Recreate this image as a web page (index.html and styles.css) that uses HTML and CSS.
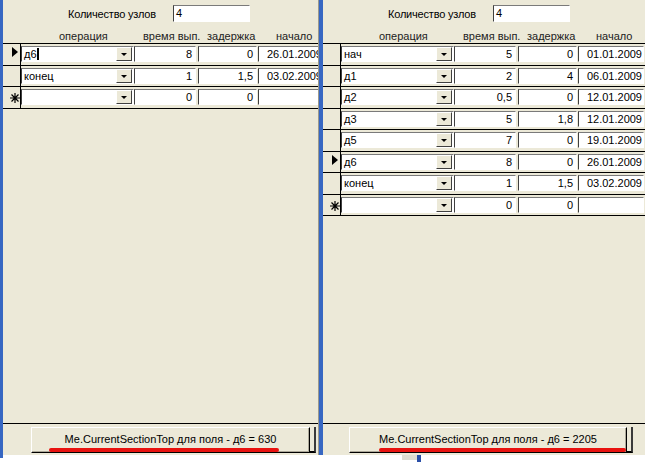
FILE: index.html
```html
<!DOCTYPE html>
<html lang="ru">
<head>
    <meta charset="UTF-8">
    <title>Узлы</title>
    <link rel="stylesheet" href="styles.css">
</head>
<body>
    <div class="desk">
        <!-- first form: three records -->
        <div class="form form-left">
            <div class="topbar">
                <span class="caption">Количество узлов</span>
                <span class="box count">4</span>
            </div>
            <div class="heads">
                <span class="h-op">операция</span>
                <span class="h-time">время вып.</span>
                <span class="h-delay">задержка</span>
                <span class="h-start">начало</span>
            </div>
            <div class="rows">
                <div class="row">
                    <span class="sel"><i class="arrow"></i></span>
                    <span class="box combo">д6<span class="caret"></span><b class="drop"></b></span>
                    <span class="box num time">8</span>
                    <span class="box num delay">0</span>
                    <span class="box num start">26.01.2009</span>
                </div>
                <div class="row">
                    <span class="sel"></span>
                    <span class="box combo">конец<b class="drop"></b></span>
                    <span class="box num time">1</span>
                    <span class="box num delay">1,5</span>
                    <span class="box num start">03.02.2009</span>
                </div>
                <div class="row">
                    <span class="sel"><svg class="star" width="10" height="10" viewBox="0 0 10 10"><path d="M5 0v10M0 5h10M1.5 1.5l7 7M8.5 1.5l-7 7" stroke="#000" stroke-width="1.2"/></svg></span>
                    <span class="box combo"><b class="drop"></b></span>
                    <span class="box num time">0</span>
                    <span class="box num delay">0</span>
                    <span class="box num start"></span>
                </div>
            </div>
            <div class="spacer"></div>
            <div class="foot">
                <div class="btn">Me.CurrentSectionTop для поля - д6 = 630<i class="mark"></i></div>
                <div class="btn-tail"></div>
            </div>
        </div>

        <!-- second form: all records -->
        <div class="form form-right">
            <div class="topbar">
                <span class="caption">Количество узлов</span>
                <span class="box count">4</span>
            </div>
            <div class="heads">
                <span class="h-op">операция</span>
                <span class="h-time">время вып.</span>
                <span class="h-delay">задержка</span>
                <span class="h-start">начало</span>
            </div>
            <div class="rows">
                <div class="row">
                    <span class="sel"></span>
                    <span class="box combo">нач<b class="drop"></b></span>
                    <span class="box num time">5</span>
                    <span class="box num delay">0</span>
                    <span class="box num start">01.01.2009</span>
                </div>
                <div class="row">
                    <span class="sel"></span>
                    <span class="box combo">д1<b class="drop"></b></span>
                    <span class="box num time">2</span>
                    <span class="box num delay">4</span>
                    <span class="box num start">06.01.2009</span>
                </div>
                <div class="row">
                    <span class="sel"></span>
                    <span class="box combo">д2<b class="drop"></b></span>
                    <span class="box num time">0,5</span>
                    <span class="box num delay">0</span>
                    <span class="box num start">12.01.2009</span>
                </div>
                <div class="row">
                    <span class="sel"></span>
                    <span class="box combo">д3<b class="drop"></b></span>
                    <span class="box num time">5</span>
                    <span class="box num delay">1,8</span>
                    <span class="box num start">12.01.2009</span>
                </div>
                <div class="row">
                    <span class="sel"></span>
                    <span class="box combo">д5<b class="drop"></b></span>
                    <span class="box num time">7</span>
                    <span class="box num delay">0</span>
                    <span class="box num start">19.01.2009</span>
                </div>
                <div class="row">
                    <span class="sel"><i class="arrow"></i></span>
                    <span class="box combo">д6<b class="drop"></b></span>
                    <span class="box num time">8</span>
                    <span class="box num delay">0</span>
                    <span class="box num start">26.01.2009</span>
                </div>
                <div class="row">
                    <span class="sel"></span>
                    <span class="box combo">конец<b class="drop"></b></span>
                    <span class="box num time">1</span>
                    <span class="box num delay">1,5</span>
                    <span class="box num start">03.02.2009</span>
                </div>
                <div class="row">
                    <span class="sel"><svg class="star" width="10" height="10" viewBox="0 0 10 10"><path d="M5 0v10M0 5h10M1.5 1.5l7 7M8.5 1.5l-7 7" stroke="#000" stroke-width="1.2"/></svg></span>
                    <span class="box combo"><b class="drop"></b></span>
                    <span class="box num time">0</span>
                    <span class="box num delay">0</span>
                    <span class="box num start"></span>
                </div>
            </div>
            <div class="spacer"></div>
            <div class="foot">
                <div class="btn">Me.CurrentSectionTop для поля - д6 = 2205<i class="mark"></i></div>
                <div class="btn-tail"></div>
            </div>
        </div>
    </div>

    <div class="below">
        <span class="edge"></span>
        <span class="stub"></span>
        <span class="stub-blue"></span>
    </div>
</body>
</html>
```

FILE: styles.css
```css
body {
    margin: 0;
    font-family: "Liberation Sans", Arial, sans-serif;
    font-size: 11px;
    color: #000;
    background: #fff;
    width: 645px;
    height: 476px;
    overflow: hidden;
}

.desk {
    display: flex;
    height: 455px;
}

.form {
    background-color: #ece9d8; /* XP beige */
    display: flex;
    flex-direction: column;
    overflow: hidden;
}

.form-left {
    width: 315px;
    flex: none;
    border-left: 3px solid #3767c2;
    border-right: 1px solid #9d9a8c;
}

.form-right {
    flex: 1;
    border-left: 4px solid #3767c2;
}

/* sunken text box */
.box {
    display: block;
    box-sizing: border-box;
    background: #fff;
    border: 1px solid;
    border-color: #7a7a7a #fff #fff #404040;
    white-space: nowrap;
    overflow: hidden;
}

.topbar {
    display: flex;
    align-items: center;
    height: 17px;
    margin-top: 5px;
    padding-left: 65px;
}

.caption {
    width: 105px;
    letter-spacing: -0.2px;
}

.count {
    width: 77px;
    height: 17px;
    line-height: 15px;
    padding-left: 2px;
}

.heads {
    display: flex;
    height: 21px;
    padding-top: 8px;
    box-sizing: border-box;
    line-height: 13px;
    color: #222;
}

.heads span {
    flex: none;
}

.h-op { margin-left: 56px; width: 84px; }
.h-time { width: 64px; }
.h-delay { width: 69px; }

.rows {
    border-bottom: 1px solid #000;
}

.row {
    display: flex;
    height: 21.5px;
    box-sizing: border-box;
    border-top: 1px solid #000;
}

.row > * {
    flex: none;
}

/* record selector column */
.sel {
    width: 18px;
    border-right: 1px solid #000;
    padding: 3px 0 0 9px;
    box-sizing: border-box;
}

.arrow {
    display: block;
    width: 0;
    height: 0;
    border-left: 6px solid #000;
    border-top: 5px solid transparent;
    border-bottom: 5px solid transparent;
}

.star {
    display: block;
    margin: 3px 0 0 -2px;
}

.row .box {
    margin-top: 2px;
    height: 16px;
    line-height: 14px;
}

.combo {
    position: relative;
    width: 113px;
    padding-left: 2px;
}

.caret {
    display: inline-block;
    width: 2px;
    height: 12px;
    background: #000;
    vertical-align: -2px;
}

/* little dropdown button inside the combo */
.drop {
    position: absolute;
    right: 1px;
    top: 0;
    width: 16px;
    height: 14px;
    box-sizing: border-box;
    background: #ece9d8;
    border: 1px solid;
    border-color: #fff #404040 #404040 #fff;
}

.drop::after {
    content: "";
    position: absolute;
    left: 4px;
    top: 5px;
    border-top: 3px solid #000;
    border-left: 3px solid transparent;
    border-right: 3px solid transparent;
}

.num {
    text-align: right;
    padding-right: 3px;
}

.time { width: 62px; }
.delay { width: 59px; margin-left: 2px; }
.start { width: 66px; margin-left: 1px; padding-right: 1px; }

.spacer {
    flex: 1;
}

.foot {
    display: flex;
    height: 32px;
    border-top: 1px solid #000;
    padding-top: 3px;
    box-sizing: border-box;
}

.form-left .foot { padding-left: 28px; }
.form-right .foot { padding-left: 26px; }

.btn {
    position: relative;
    width: 279px;
    height: 26px;
    box-sizing: border-box;
    background: #ece9d8;
    border: 1px solid;
    border-color: #fff #000 #000 #fff;
    box-shadow: inset -1px -1px #aca899;
    text-align: center;
    line-height: 22px;
    white-space: nowrap;
}

.form-right .btn { width: 278px; }

.btn-tail {
    width: 6px;
    height: 26px;
    box-sizing: border-box;
    border-right: 2px solid #3a3a3a;
    border-bottom: 2px solid #000;
}

/* red marker stroke under the caption */
.mark {
    position: absolute;
    bottom: 0;
    left: 17px;
    width: 230px;
    height: 4px;
    border-radius: 2px;
    background: #e8120f;
}

.form-right .mark {
    left: 29px;
    width: 247px;
}

.below {
    display: flex;
    align-items: flex-start;
}

.edge {
    width: 3px;
    height: 3px;
    background: #3767c2;
}

.stub {
    width: 15px;
    height: 5px;
    margin-left: 399px;
    background: #dedbcf;
}

.stub-blue {
    width: 4px;
    height: 7px;
    background: #2a4fa8;
}
```
